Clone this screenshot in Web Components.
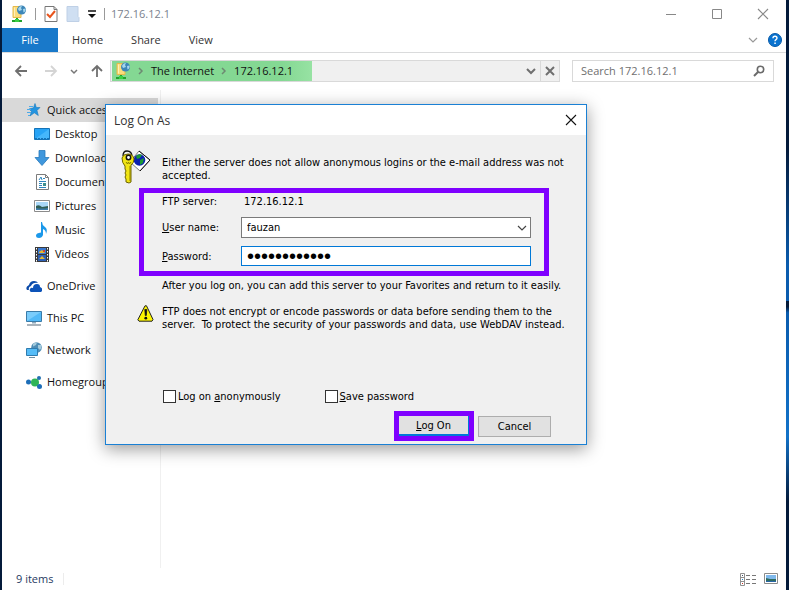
<!DOCTYPE html>
<html lang="en">
<head>
<meta charset="utf-8">
<meta name="viewport" content="width=device-width, initial-scale=1">
<title>172.16.12.1</title>
<style>
  body {
    margin: 0;
    min-height: 100vh;
    display: flex;
    background: linear-gradient(#041a3a 25%, #0a5cae 45%, #0a5cae 51%, #041a3a 51%, #041a3a 52%, #0a5cae 53%, #1272c8 74%, #041a3a 85%) right / 3px 100% no-repeat, #041a3a;
    font-family: "Open Sans", "Noto Sans", sans-serif;
    font-size: 11px;
    line-height: 16px;
    color: #111;
  }
</style>
</head>
<body>
<explorer-window></explorer-window>
<logon-dialog heading="Log On As">
  <span slot="message">Either the server does not allow anonymous logins or the e-mail address was not accepted.</span>
  <span slot="server">172.16.12.1</span>
  <span slot="hint">After you log on, you can add this server to your Favorites and return to it easily.</span>
  <span slot="warning">FTP does not encrypt or encode passwords or data before sending them to the server.&nbsp; To protect the security of your passwords and data, use WebDAV instead.</span>
</logon-dialog>

<script>
const icons = {
  ftp: [16, 18, `<path d="M2 1.500h8v11H2z" fill="#fbdc7c" stroke="#e5b94a"/><path d="M3.500 2.500v9" stroke="#fff0b8"/><circle cx="10.500" cy="5" r="4.500" fill="#3c86b8"/><path d="M7 4q1-3 4-3l-1 2 1 2-3 1zM12 4l2.500-.5q.5 3-2 4z" fill="#a5d6ec"/><path d="M6 13v3M1 16h10" stroke="#22a32c" stroke-width="2"/><path d="M4 14h4v3H4z" fill="#3bd043"/>`],
  properties: [14, 18, `<path d="M1 1.500h9l3 3v12H1z" fill="#fff" stroke="#777"/><path d="M10 1.500v3h3" fill="none" stroke="#777"/><path d="M3 9l3 3 5-6" fill="none" stroke="#e8541c" stroke-width="2"/>`],
  folder: [14, 18, `<path d="M1 1.500h11v10l1 1v4H1z" fill="#cfdff2" stroke="#bfd0e6"/>`],
  customize: [8, 8, `<path d="M0 1h8" stroke="#111" stroke-width="1.500"/><path d="M0 4h8L4 8z" fill="#111"/>`],
  minimize: [12, 12, `<path d="M1 6.500h10" stroke="#888"/>`],
  maximize: [12, 12, `<path d="M1.500 1.500h9v9h-9z" fill="none" stroke="#888"/>`],
  close: [12, 12, `<path d="M1 1l10 10M11 1L1 11" stroke="currentColor" stroke-width="1.100"/>`],
  help: [14, 14, `<circle cx="7" cy="7" r="6.500" fill="#0a73d0" stroke="#075aa8"/><path d="M5 5.200q0-2 2-2t2 1.800q0 1-1 1.600-1 .6-1 1.600" fill="none" stroke="#fff" stroke-width="1.400"/><path d="M6.300 9.500h1.500v1.500H6.300z" fill="#fff"/>`],
  back: [14, 14, `<path d="M13 7H2M7 2L2 7l5 5" fill="none" stroke="#6f6f6f" stroke-width="1.800"/>`],
  forward: [14, 14, `<path d="M1 7h11M7 2l5 5-5 5" fill="none" stroke="#d4d4d4" stroke-width="1.800"/>`],
  up: [14, 14, `<path d="M7 13V2M2 7l5-5 5 5" fill="none" stroke="#6f6f6f" stroke-width="1.800"/>`],
  chevron: [10, 10, `<path d="M1 3l4 4 4-4" fill="none" stroke="currentColor" stroke-width="1.200"/>`],
  recent: [8, 8, `<path d="M1 3l3 3 3-3" fill="none" stroke="#777" stroke-width="1.500"/>`],
  drop: [10, 10, `<path d="M1 3l4 4 4-4" fill="none" stroke="#6f6f6f" stroke-width="2"/>`],
  crumb: [8, 8, `<path d="M2 1l3 3-3 3" fill="none" stroke="#6d8a72" stroke-width="1.500"/>`],
  stop: [10, 10, `<path d="M1 1l8 8M9 1L1 9" stroke="#6f6f6f" stroke-width="2"/>`],
  search: [12, 12, `<circle cx="7.500" cy="4.500" r="3.200" fill="none" stroke="#6a6a6a" stroke-width="1.600"/><path d="M5 7l-4 4" stroke="#6a6a6a" stroke-width="2"/>`],
  star: [16, 16, `<path d="M9 1.500l1.300 4H14l-3 3 1.300 5-4-2.700-4.300 3.200 1.500-4.500L3 7l4.500-1.200z" fill="#2394e0" stroke="#1579bd" stroke-width=".6"/><path d="M3 4.500h4M1 7.500h4M1 10.500h4M2 13.500h2" stroke="#4aa9e8"/>`],
  desktop: [16, 12, `<path d="M.5.5h15v11H.5z" fill="#27a3f5" stroke="#1473b8"/><path d="M1 11L15 1v10z" fill="#45b6fb"/><path d="M1 10.500h14" stroke="#1473b8" stroke-dasharray="2 1"/>`],
  downloads: [16, 16, `<path d="M5 .5h6v7h4L8 15.500 1 7.500h4z" fill="#3f97dd" stroke="#2778bb" stroke-width=".8"/>`],
  documents: [13, 16, `<path d="M.5.500h9l3 3v12H.5z" fill="#fff" stroke="#7c7c7c"/><path d="M9.500.5v3h3" fill="none" stroke="#7c7c7c"/><path d="M3 6l2-3 1 3M7 4.500h2M3 7.500h7M3 9.500h3M3 11.500h3M3 13.500h7" fill="none" stroke="#2f86bd"/><path d="M7 9h3v3H7z" fill="#3d8f8c"/>`],
  pictures: [16, 12, `<path d="M.5.500h15v11H.5z" fill="#fff" stroke="#8b8b8b"/><path d="M2 2h12v8H2z" fill="#a9d7f7"/><path d="M2 6q3-2 6 1l6-1v4H2z" fill="#305f56"/><path d="M2 8q6 1 12 0v2H2z" fill="#3e7ca8"/>`],
  music: [12, 16, `<path d="M6 0q0 3 3 5t1 7q0-4-3-5v6q-1 3-4 3t-3-2.500T5 10.500V0z" fill="#1b98ea"/>`],
  videos: [14, 15, `<path d="M0 0h14v15H0z" fill="#3a3a3a"/><path d="M1.500 1v14M12.500 1v14" stroke="#fff" stroke-dasharray="1.500 1.500"/><path d="M3 1h8v6H3z" fill="#3a78d0"/><path d="M3 8h8v6H3z" fill="#2c5fb5"/><path d="M4 5l3-2 3 3H4zM4 12l3-3 3 3z" fill="#e6b932"/><path d="M8 3h2v2H8z" fill="#d4452c"/>`],
  onedrive: [16, 11, `<path d="M1 9q-2-3 2-5 1-4 5-4 3 0 4 2-5-1-7 3Q2 6 3 9z" fill="#0b4aa8"/><path d="M5 11q-2-1-1-3 1-2 3-1 0-4 4-4 3 0 3 3 3 1 2 4l-1 1z" fill="#0d53b8"/>`],
  pc: [16, 15, `<path d="M.5.500h15v10H.5z" fill="#52b9f7" stroke="#3a7ba8"/><path d="M1 10L15 1H1z" fill="#7accfb"/><path d="M6 11h4v1.500H6z" fill="#8fa9bb"/><path d="M1 14h14" stroke="#8d9aa4" stroke-width="1.500"/>`],
  network: [16, 16, `<circle cx="10.500" cy="5.500" r="5.300" fill="#4f8db5"/><path d="M7 2q2-2 4-1.500L10 3 7 4.500zM12 3l3 0q1 3-1 5l-2-2z" fill="#a4cbdd"/><path d="M.5 6.500h11v7H.5z" fill="#55bcf7" stroke="#2f7bae"/><path d="M3 15.500h6" stroke="#6f8ea2"/>`],
  homegroup: [16, 13, `<path d="M2 6h6l5-4M8 6l5 5" fill="none" stroke="#8bb" /><circle cx="2.500" cy="6" r="2.500" fill="#1d6eb8"/><circle cx="9" cy="6.500" r="4" fill="#2fb457"/><circle cx="13" cy="2" r="2" fill="#2370b0"/><circle cx="13.500" cy="10.500" r="2.500" fill="#1d6eb8"/>`],
  details: [16, 13, `<path d="M.5.500h4v12h-4zM.5 4.500h4M.5 8.500h4" fill="#fff" stroke="#909090"/><path d="M6 2.500h4M12 2.500h4M6 6.500h4M12 6.500h4M6 10.500h4M12 10.500h4" stroke="#777"/><path d="M2 2h1v1H2z" fill="#456"/><path d="M2 6h1v1H2z" fill="#28c"/><path d="M2 10h1v1H2z" fill="#c32"/>`],
  thumbs: [14, 12, `<path d="M.5.500h13v10H.5z" fill="#fff" stroke="#8b8b8b"/><path d="M2 2h10v7H2z" fill="#7fb9ec"/><path d="M2 5l4 1 6 0v3H2z" fill="#2e6b61"/><path d="M2 8h10v1H2z" fill="#2766a8"/>`],
  key: [30, 34, `<path d="M18 1l11 9-10 11-10-9z" fill="#fff" stroke="#777"/><path d="M18 1l11 9-10 11" fill="none" stroke="#111"/><circle cx="18.500" cy="10" r="5.800" fill="#0a1fb0"/><path d="M15 6q3-3 6-1l-2 3-3 1zM19 10l4-2-1 5-3 2z" fill="#1b9a35"/><path d="M2 6q0-5 4-5 5 0 5 6" fill="none" stroke="#111" stroke-width="1.300"/><path d="M1 8q1-4 6-4t6 5q0 4-3 6v17l-2 1-3-1v-3l-1-2 1-2-1-2 1-2-1-2v-3Q1 13 1 8z" fill="#f1e512" stroke="#6b6200"/><path d="M9 16v15" stroke="#8a7e00"/><circle cx="7.500" cy="7.500" r="2.200" fill="#fff" stroke="#111" stroke-width="1.500"/><path d="M5 12l1.500 2 1-2 1 2 1.500-2" fill="none" stroke="#8a8000"/>`],
  warning: [17, 17, `<path d="M8 .8h1.500L16 14.500l-1 1.700H2L.8 14.800z" fill="#fdf500" stroke="#222"/><path d="M7.800 4.500h2L9.300 10.500h-1z" fill="#111" stroke="#111" stroke-width=".8"/><circle cx="8.800" cy="13.200" r="1.400" fill="#111"/>`]
};

class UiIcon extends HTMLElement {
  constructor() {
    super();
    this.attachShadow({mode: "open"});
  }
  connectedCallback() {
    const [w, h, shapes] = icons[this.getAttribute("name")];
    this.shadowRoot.innerHTML = /*html*/ `
      <style>
        :host { display: inline-flex; flex: none; align-items: center; justify-content: center; }
        svg { display: block; }
      </style>
      <svg width="${w}" height="${h}" viewBox="0 0 ${w} ${h}" aria-hidden="true">${shapes}</svg>`;
  }
}
customElements.define("ui-icon", UiIcon);

class TitleBar extends HTMLElement {
  constructor() {
    super();
    this.attachShadow({mode: "open"});
    this.shadowRoot.innerHTML = /*html*/ `
      <style>
        :host { display: flex; align-items: center; height: 28px; padding-left: 9px; color: #7a828e; }
        button { display: flex; align-items: center; justify-content: center; border: 0; padding: 0; background: none; color: #888; }
        .quick { display: flex; align-items: center; gap: 8px; }
        .bar { width: 1px; height: 12px; background: #999; }
        .title { flex: 1; padding-left: 6px; }
        .controls { display: flex; }
        .controls button { width: 46px; height: 28px; }
      </style>
      <div class="quick">
        <ui-icon name="ftp"></ui-icon>
        <span class="bar"></span>
        <button aria-label="Properties"><ui-icon name="properties"></ui-icon></button>
        <button aria-label="New folder"><ui-icon name="folder"></ui-icon></button>
        <button aria-label="Customize"><ui-icon name="customize"></ui-icon></button>
        <span class="bar"></span>
      </div>
      <div class="title"><slot></slot></div>
      <div class="controls">
        <button aria-label="Minimize"><ui-icon name="minimize"></ui-icon></button>
        <button aria-label="Maximize"><ui-icon name="maximize"></ui-icon></button>
        <button aria-label="Close"><ui-icon name="close"></ui-icon></button>
      </div>`;
  }
}
customElements.define("title-bar", TitleBar);

class RibbonTabs extends HTMLElement {
  constructor() {
    super();
    this.attachShadow({mode: "open"});
    this.shadowRoot.innerHTML = /*html*/ `
      <style>
        :host { display: flex; align-items: center; height: 24px; border-bottom: 1px solid #dadbdc; padding-right: 4px; }
        button { height: 24px; border: 0; padding: 0 14px; background: none; font: inherit; color: #333; }
        .file { width: 56px; padding: 0; background: #1979ca; color: #fff; }
        .side { display: flex; align-items: center; gap: 10px; margin-left: auto; }
        .side button { display: flex; align-items: center; padding: 0; color: #999; }
      </style>
      <button class="file">File</button>
      <button>Home</button>
      <button>Share</button>
      <button>View</button>
      <div class="side">
        <button aria-label="Expand ribbon"><ui-icon name="chevron"></ui-icon></button>
        <button aria-label="Help"><ui-icon name="help"></ui-icon></button>
      </div>`;
  }
}
customElements.define("ribbon-tabs", RibbonTabs);

class AddressBar extends HTMLElement {
  constructor() {
    super();
    this.attachShadow({mode: "open"});
    this.shadowRoot.innerHTML = /*html*/ `
      <style>
        :host { display: flex; align-items: center; padding: 7px 12px 8px; }
        button { display: flex; align-items: center; justify-content: center; border: 0; padding: 0; background: none; }
        .nav { display: flex; align-items: center; gap: 12px; width: 96px; }
        .history { display: flex; gap: 16px; }
        .path { flex: 1; display: flex; height: 20px; border: 1px solid #d9d9d9; background: #f0f0f0; }
        .crumbs { display: flex; align-items: center; gap: 6px; box-sizing: border-box; width: 201px; padding-left: 3px; background: linear-gradient(90deg, #84d893 85%, #97e2a3); border-left: 1px solid #f0f0f0; }
        .crumbs a { color: #111; text-decoration: none; }
        .drop { width: 18px; margin-left: auto; }
        .stop { width: 19px; border-left: 1px solid #d9d9d9; }
        .search { display: flex; align-items: center; box-sizing: border-box; width: 202px; height: 22px; margin-left: 12px; padding: 0 8px; border: 1px solid #d9d9d9; background: #fff; }
        input { flex: 1; min-width: 0; border: 0; padding: 0; outline: 0; background: none; font: inherit; }
        input::placeholder { color: #6f6f6f; opacity: 1; }
      </style>
      <div class="nav">
        <div class="history">
          <button aria-label="Back"><ui-icon name="back"></ui-icon></button>
          <button aria-label="Forward"><ui-icon name="forward"></ui-icon></button>
        </div>
        <button aria-label="Recent locations"><ui-icon name="recent"></ui-icon></button>
        <button aria-label="Up"><ui-icon name="up"></ui-icon></button>
      </div>
      <div class="path">
        <div class="crumbs">
          <ui-icon name="ftp"></ui-icon>
          <ui-icon name="crumb"></ui-icon>
          <a href="#">The Internet</a>
          <ui-icon name="crumb"></ui-icon>
          <a href="#">172.16.12.1</a>
        </div>
        <button class="drop" aria-label="Previous locations"><ui-icon name="drop"></ui-icon></button>
        <button class="stop" aria-label="Stop"><ui-icon name="stop"></ui-icon></button>
      </div>
      <div class="search">
        <input type="text" placeholder="Search 172.16.12.1" aria-label="Search">
        <ui-icon name="search"></ui-icon>
      </div>`;
  }
}
customElements.define("address-bar", AddressBar);

class NavItem extends HTMLElement {
  constructor() {
    super();
    this.attachShadow({mode: "open"});
  }
  connectedCallback() {
    this.shadowRoot.innerHTML = /*html*/ `
      <style>
        :host { display: block; }
        :host([selected]) { background: #d9d9d9; }
        :host([top]) { margin-top: 8px; }
        a { display: flex; align-items: center; height: 24px; padding-left: 24px; color: #111; text-decoration: none; white-space: nowrap; }
        :host([child]) a { padding-left: 32px; }
        ui-icon { width: 16px; margin-right: 5px; }
      </style>
      <a href="#"><ui-icon name="${this.getAttribute("icon")}"></ui-icon><slot></slot></a>`;
  }
}
customElements.define("nav-item", NavItem);

class ExplorerWindow extends HTMLElement {
  constructor() {
    super();
    this.attachShadow({mode: "open"});
    this.shadowRoot.innerHTML = /*html*/ `
      <style>
        :host { display: flex; flex: 1; flex-direction: column; min-width: 0; margin: 0 3px 0 2px; background: #fff; }
        .main { display: flex; flex: 1; }
        nav { box-sizing: border-box; width: 159px; padding: 8px 2px 0 0; border-right: 1px solid #f0f0f0; }
        footer { display: flex; align-items: center; height: 22px; padding: 0 8px 0 14px; color: #1f3a5f; }
        .count { padding-right: 10px; border-right: 1px solid #ececec; line-height: 12px; }
        .views { display: flex; gap: 8px; margin-left: auto; }
        .views button { display: flex; align-items: center; border: 0; padding: 0; background: none; }
      </style>
      <title-bar>172.16.12.1</title-bar>
      <ribbon-tabs></ribbon-tabs>
      <address-bar></address-bar>
      <div class="main">
        <nav>
          <nav-item icon="star" selected>Quick access</nav-item>
          <nav-item icon="desktop" child>Desktop</nav-item>
          <nav-item icon="downloads" child>Downloads</nav-item>
          <nav-item icon="documents" child>Documents</nav-item>
          <nav-item icon="pictures" child>Pictures</nav-item>
          <nav-item icon="music" child>Music</nav-item>
          <nav-item icon="videos" child>Videos</nav-item>
          <nav-item icon="onedrive" top>OneDrive</nav-item>
          <nav-item icon="pc" top>This PC</nav-item>
          <nav-item icon="network" top>Network</nav-item>
          <nav-item icon="homegroup" top>Homegroup</nav-item>
        </nav>
      </div>
      <footer>
        <span class="count">9 items</span>
        <div class="views">
          <button aria-label="Details"><ui-icon name="details"></ui-icon></button>
          <button aria-label="Large icons"><ui-icon name="thumbs"></ui-icon></button>
        </div>
      </footer>`;
  }
}
customElements.define("explorer-window", ExplorerWindow);

class LogonDialog extends HTMLElement {
  constructor() {
    super();
    this.attachShadow({mode: "open"});
  }
  connectedCallback() {
    this.shadowRoot.innerHTML = /*html*/ `
      <style>
        :host {
          position: absolute;
          left: 105px;
          top: 104px;
          width: 480px;
          border: 1px solid #1a80d4;
          background: #f0f0f0;
          box-shadow: 0 4px 16px rgba(0, 0, 0, .4);
          font-family: "DejaVu Sans Condensed", "DejaVu Sans", sans-serif;
          font-size: 11px;
          line-height: 13px;
          color: #000;
        }
        header { display: flex; align-items: center; justify-content: space-between; height: 30px; padding: 0 9px 0 8px; background: #fff; font-family: "Open Sans", sans-serif; font-size: 12px; color: #333; }
        header button { display: flex; border: 0; padding: 0; background: none; color: #111; }
        .row { display: flex; align-items: center; }
        .message { padding: 15px 16px 4px 15px; gap: 11px; }
        .message div { padding-top: 3px; }
        .fields { display: grid; grid-template-columns: 79px 1fr; grid-template-rows: 16px 21px 20px; row-gap: 8px; align-items: center; margin: 0 37px 0 33px; padding: 0 13px 5px 18px; border: 5px solid #7f00ff; }
        .server { padding-left: 3px; }
        .combo { display: grid; align-items: center; }
        select, input[type=password] { box-sizing: border-box; width: 100%; height: 20px; margin: 0; padding: 0 5px; border: 1px solid #7a7a7a; border-radius: 0; outline: 0; background: #fff; font: inherit; color: #000; }
        select { grid-area: 1 / 1; height: 21px; appearance: none; }
        .combo ui-icon { grid-area: 1 / 1; justify-self: end; margin-right: 4px; color: #444; pointer-events: none; }
        input[type=password] { border-color: #0078d7; font-family: "Liberation Sans", sans-serif; font-size: 20px; line-height: 18px; }
        .hint { padding: 3px 24px 13px 56px; }
        .warning { align-items: flex-start; gap: 8px; padding: 0 20px 0 31px; }
        .options { height: 15px; margin-top: 58px; padding-left: 57px; gap: 44px; }
        label { display: flex; align-items: center; }
        .options label { gap: 2px; }
        .options span { white-space: nowrap; }
        input[type=checkbox] { box-sizing: border-box; appearance: none; width: 13px; height: 13px; margin: 0; border: 1px solid #333; background: #fff; }
        .actions { justify-content: flex-end; gap: 4px; padding: 7px 35px 3px 0; }
        .actions button { box-sizing: border-box; width: 73px; height: 21px; border: 1px solid #adadad; padding: 0; background: #e1e1e1; font: inherit; color: #000; }
        .mark { border: 5px solid #7f00ff; }
        .actions .default { display: block; width: 70px; height: 20px; border: 0 solid #0078d7; border-width: 0 1px 2px 0; }
      </style>
      <header>
        <span>${this.getAttribute("heading")}</span>
        <button aria-label="Close"><ui-icon name="close"></ui-icon></button>
      </header>
      <div class="row message"><ui-icon name="key"></ui-icon><div><slot name="message"></slot></div></div>
      <div class="fields">
        <span>FTP server:</span>
        <span class="server"><slot name="server"></slot></span>
        <label for="user"><span><u>U</u>ser name:</span></label>
        <div class="combo">
          <select id="user"><option>fauzan</option></select>
          <ui-icon name="chevron"></ui-icon>
        </div>
        <label for="pass"><span><u>P</u>assword:</span></label>
        <input id="pass" type="password" value="************">
      </div>
      <div class="hint"><slot name="hint"></slot></div>
      <div class="row warning"><ui-icon name="warning"></ui-icon><slot name="warning"></slot></div>
      <div class="row options">
        <label><input type="checkbox"><span>Log on <u>a</u>nonymously</span></label>
        <label><input type="checkbox"><span><u>S</u>ave password</span></label>
      </div>
      <div class="row actions">
        <div class="mark"><button class="default"><u>L</u>og On</button></div>
        <button>Cancel</button>
      </div>`;
  }
}
customElements.define("logon-dialog", LogonDialog);
</script>
</body>
</html>
